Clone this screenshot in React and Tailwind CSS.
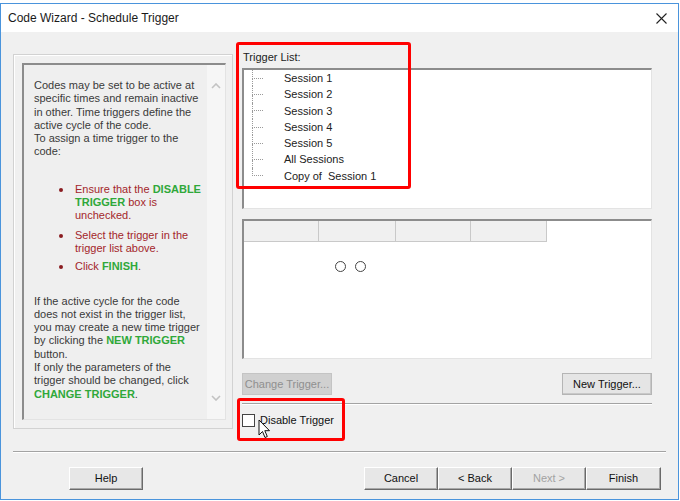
import React from 'react';

const sunken = 'border-t-2 border-l-2 border-t-[#8c8c8c] border-l-[#8c8c8c] border-r border-b border-r-[#e3e3e3] border-b-[#e3e3e3]';

const triggers = ['Session 1', 'Session 2', 'Session 3', 'Session 4', 'Session 5', 'All Sessions', 'Copy of\u00a0 Session 1'];

const Red = ({ children }) => <span className="text-[#a3262b]">{children}</span>;
const Green = ({ children }) => <span className="text-[#2fa83a] font-bold">{children}</span>;

const Button = ({ children, disabled, className = '' }) => (
    <div
        className={
            'h-[23px] flex items-center justify-center text-[11px] bg-[#e7e7e7] border-t border-l border-t-white border-l-white border-r border-b border-r-[#6a6a6a] border-b-[#6a6a6a] shadow-[inset_-1px_-1px_0_#a8a8a8] ' +
            (disabled ? 'text-[#a2a2a2] ' : 'text-[#111] ') +
            className
        }
    >
        {children}
    </div>
);

const TreeRow = ({ label, last }) => (
    <div className="flex h-[16.3px]">
        <div className="ml-[8px] w-[11px] flex flex-col">
            <div className="flex-1 border-l border-b border-dotted border-[#9a9a9a]" />
            <div className={'flex-1 border-dotted border-[#9a9a9a] ' + (last ? '' : 'border-l')} />
        </div>
        <div className="ml-[21px] leading-[16px] text-[11px] text-[#222] whitespace-nowrap">{label}</div>
    </div>
);

const Bullet = ({ children, className = '' }) => (
    <div className={'flex ' + className}>
        <div className="w-[41px] shrink-0 flex justify-end pr-[12px] pt-[5px]">
            <div className="w-[4px] h-[4px] rounded-full bg-[#8a1c20]" />
        </div>
        <div>{children}</div>
    </div>
);

const Chevron = ({ down }) => (
    <svg width="10" height="6" viewBox="0 0 10 6">
        <path d={down ? 'M1 1 L5 5 L9 1' : 'M1 5 L5 1 L9 5'} fill="none" stroke="#c3c3c3" strokeWidth="1.6" />
    </svg>
);

export default function App() {
    return (
        <div className="w-[680px] h-[501px] bg-white overflow-hidden relative font-['Liberation_Sans',Arial,sans-serif]">
            <div className="h-[3px] bg-white" />
            <div className="w-[679px] h-[497px] border border-[#4a94dc] flex flex-col bg-[#f0f0f0]">
                {/* title bar */}
                <div className="h-[28px] bg-white flex items-center justify-between pl-[7px] pr-[11px]">
                    <span className="text-[12px] text-[#1a1a1a]">Code Wizard - Schedule Trigger</span>
                    <svg width="11" height="11" viewBox="0 0 11 11">
                        <path d="M0.5 0.5 L10.5 10.5 M10.5 0.5 L0.5 10.5" stroke="#222" strokeWidth="1.1" />
                    </svg>
                </div>

                <div className="flex-1 flex flex-col pl-[12px] pr-[12px]">
                    <div className="flex mt-[16px]">
                        {/* help panel */}
                        <div className="mt-[6px] w-[220px] h-[375px] border border-[#d2d2d2] shadow-[inset_1px_1px_0_#fff] pl-[8px] pt-[8px]">
                            <div className={'w-[204px] h-[357px] flex bg-[#efefef] ' + sunken}>
                                <div className="flex-1 pl-[10px] pt-[14px] text-[11px] leading-[13.3px] text-[#3a3a3a] whitespace-nowrap">
                                    <div>
                                        Codes may be set to be active at<br />
                                        specific times and remain inactive<br />
                                        in other. Time triggers define the<br />
                                        active cycle of the code.<br />
                                        To assign a time trigger to the<br />
                                        code:
                                    </div>
                                    <Bullet className="mt-[24px]">
                                        <Red>Ensure that the </Red><Green>DISABLE</Green><br />
                                        <Green>TRIGGER</Green><Red> box is</Red><br />
                                        <Red>unchecked.</Red>
                                    </Bullet>
                                    <Bullet className="mt-[6px]">
                                        <Red>Select the trigger in the</Red><br />
                                        <Red>trigger list above.</Red>
                                    </Bullet>
                                    <Bullet className="mt-[5px]">
                                        <Red>Click </Red><Green>FINISH</Green><Red>.</Red>
                                    </Bullet>
                                    <div className="mt-[21px]">
                                        If the active cycle for the code<br />
                                        does not exist in the trigger list,<br />
                                        you may create a new time trigger<br />
                                        by clicking the <Green>NEW TRIGGER</Green><br />
                                        button.<br />
                                        If only the parameters of the<br />
                                        trigger should be changed, click<br />
                                        <Green>CHANGE TRIGGER</Green>.
                                    </div>
                                </div>
                                <div className="w-[18px] bg-[#f6f6f6] flex flex-col items-center justify-between pt-[18px] pb-[18px]">
                                    <Chevron />
                                    <Chevron down />
                                </div>
                            </div>
                        </div>

                        {/* trigger side */}
                        <div className="ml-[9px] w-[410px] flex flex-col">
                            <div className="h-[20px] leading-[18px] text-[11px] text-[#222] pl-[1px]">Trigger List:</div>
                            <div className={'h-[141px] bg-white ' + sunken}>
                                {triggers.map((t, i) => (
                                    <TreeRow key={t} label={t} last={i === triggers.length - 1} />
                                ))}
                            </div>

                            <div className={'mt-[10px] h-[140px] bg-white flex flex-col ' + sunken}>
                                <div className="flex h-[21px]">
                                    {[75, 77, 75, 76].map((w, i) => (
                                        <div key={i} style={{ width: w }} className="bg-[#f0f0f0] border-r border-b border-[#c9c9c9]" />
                                    ))}
                                </div>
                                <div className="flex gap-[9px] ml-[91px] mt-[19px]">
                                    <div className="w-[11px] h-[11px] rounded-full border-[1.5px] border-[#444]" />
                                    <div className="w-[11px] h-[11px] rounded-full border-[1.5px] border-[#444]" />
                                </div>
                            </div>

                            <div className="mt-[14px] flex justify-between">
                                <div className="w-[90px] h-[22px] flex items-center justify-center text-[11px] text-[#8f8f8f] bg-[#d0d0d0] border border-[#c4c4c4]">
                                    Change Trigger...
                                </div>
                                <div className="w-[90px] h-[22px] flex items-center justify-center text-[11px] text-[#111] bg-[#e5e5e5] border border-[#b5b5b5] shadow-[inset_-1px_-1px_0_#c8c8c8]">
                                    New Trigger...
                                </div>
                            </div>

                            <div className="mt-[8px] h-[2px] border-t border-[#a3a3a3] border-b border-b-white" />

                            <div className="mt-[7px] flex items-center">
                                <div className="w-[13px] h-[13px] bg-white border border-[#444]" />
                                <span className="ml-[5px] text-[11px] text-[#111]">Disable Trigger</span>
                            </div>
                        </div>
                    </div>

                    <div className="mt-[22px] h-[2px] border-t border-[#a3a3a3] border-b border-b-white" />

                    <div className="mt-[14px] flex justify-between">
                        <Button className="ml-[56px] w-[74px]">Help</Button>
                        <div className="flex mr-[5px]">
                            <Button className="w-[74px]">Cancel</Button>
                            <Button className="w-[74px]">&lt; Back</Button>
                            <Button className="w-[74px]" disabled>Next &gt;</Button>
                            <Button className="w-[75px]">Finish</Button>
                        </div>
                    </div>
                </div>
            </div>

            {/* annotations */}
            <div className="absolute left-[236px] top-[42px] w-[175px] h-[147px] border-[3px] border-[#ff0000] rounded-[3px]" />
            <div className="absolute left-[237px] top-[398px] w-[108px] h-[43px] border-[3px] border-[#ff0000] rounded-[3px]" />

            {/* mouse pointer */}
            <svg className="absolute left-[258px] top-[419px]" width="13" height="20" viewBox="0 0 13 20">
                <path d="M1 1 L1 16 L4.5 12.5 L7 18.5 L9.3 17.5 L6.8 11.7 L11.5 11.7 Z" fill="#fff" stroke="#111" strokeWidth="1" strokeLinejoin="round" />
            </svg>
        </div>
    );
}
